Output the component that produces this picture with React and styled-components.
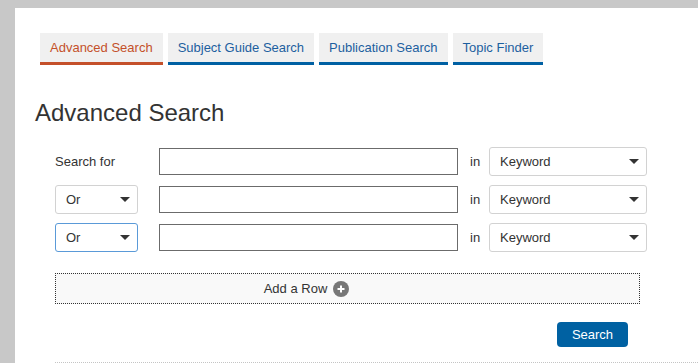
import React from 'react'
import styled, { createGlobalStyle } from 'styled-components'

const GlobalStyle = createGlobalStyle`
  html, body {
    margin: 0;
    padding: 0;
    background: #c8c8c8;
    font-family: "Liberation Sans", Arial, sans-serif;
    color: #333;
  }
`

const Panel = styled.main`
  margin: 8px 0 0 15px;
  background: #fff;
  min-height: 355px;
  padding: 25px 0 0 20px;
  box-sizing: border-box;
  overflow: hidden;
`

const Tabs = styled.nav`
  display: flex;
  gap: 5px;
  margin-left: 5px;
`

const Tab = styled.a`
  display: block;
  height: 29px;
  line-height: 30px;
  padding: 0 10px;
  background: #f0f0f0;
  font-size: 13px;
  color: ${(p) => (p.$active ? '#c4502a' : '#1d5f9f')};
  border-bottom: 3px solid ${(p) => (p.$active ? '#c4502a' : '#0060a3')};
  text-decoration: none;
  white-space: nowrap;
`

const Heading = styled.h1`
  margin: 34px 0 0;
  font-size: 24px;
  line-height: 28px;
  font-weight: normal;
  color: #333;
`

const Form = styled.form`
  margin: 20px 0 0 20px;
`

const Row = styled.div`
  display: grid;
  grid-template-columns: 104px 299px 31px 158px;
  align-items: center;
  height: 29px;
  margin-bottom: 9px;
`

const Label = styled.span`
  font-size: 13px;
  color: #333;
`

const TextInput = styled.input`
  box-sizing: border-box;
  width: 100%;
  height: 27px;
  border: 1px solid #6b6b6b;
  border-radius: 0;
  padding: 0 6px;
  font: inherit;
  outline: none;
`

const In = styled.span`
  font-size: 13px;
  color: #333;
  padding-left: 12px;
`

const SelectBox = styled.div`
  box-sizing: border-box;
  width: ${(p) => p.$width || '100%'};
  height: 29px;
  display: flex;
  align-items: center;
  justify-content: space-between;
  padding: 0 7px 0 10px;
  border: 1px solid ${(p) => (p.$focus ? '#5a9ad8' : '#d2d2d2')};
  border-radius: 3px;
  background: #fff;
  font-size: 13px;
  color: #333;
`

const Caret = () => (
  <svg width="10" height="5" viewBox="0 0 10 5">
    <path d="M0 0 L10 0 L5 5 Z" fill="#333" />
  </svg>
)

const Select = ({ value, width, focus }) => (
  <SelectBox $width={width} $focus={focus}>
    <span>{value}</span>
    <Caret />
  </SelectBox>
)

const AddRow = styled.button`
  display: flex;
  align-items: center;
  justify-content: center;
  gap: 6px;
  box-sizing: border-box;
  width: 585px;
  height: 31px;
  margin-top: 21px;
  padding: 0 82px 0 0;
  background: #f9f9f9;
  border: 1px dotted #333;
  font-family: "Liberation Sans", Arial, sans-serif;
  font-size: 13px;
  color: #333;
  cursor: pointer;
`

const PlusDot = styled.span`
  display: inline-flex;
  align-items: center;
  justify-content: center;
  width: 16px;
  height: 16px;
  border-radius: 50%;
  background: #777;
`

const Actions = styled.div`
  display: flex;
  justify-content: flex-end;
  width: 573px;
  margin-top: 18px;
`

const SearchButton = styled.button`
  width: 71px;
  height: 25px;
  border: none;
  border-radius: 4px;
  background: #0061a2;
  color: #fff;
  font-family: "Liberation Sans", Arial, sans-serif;
  font-size: 13px;
  cursor: pointer;
`

const Divider = styled.div`
  margin-top: 15px;
  border-top: 1px dotted #c4c4c4;
`

const rows = [
  { lead: 'label' },
  { lead: 'select' },
  { lead: 'select', focus: true },
]

const App = () => {
  return (
    <>
      <GlobalStyle />
      <Panel>
        <Tabs>
          <Tab $active>Advanced Search</Tab>
          <Tab>Subject Guide Search</Tab>
          <Tab>Publication Search</Tab>
          <Tab>Topic Finder</Tab>
        </Tabs>
        <Heading>Advanced Search</Heading>
        <Form onSubmit={(e) => e.preventDefault()}>
          {rows.map((r, i) => (
            <Row key={i}>
              {r.lead === 'label' ? (
                <Label>Search for</Label>
              ) : (
                <Select value="Or" width="83px" focus={r.focus} />
              )}
              <TextInput type="text" />
              <In>in</In>
              <Select value="Keyword" />
            </Row>
          ))}
          <AddRow type="button">
            Add a Row
            <PlusDot>
              <svg width="8" height="8" viewBox="0 0 8 8">
                <path d="M4 0.5 V7.5 M0.5 4 H7.5" stroke="#fff" strokeWidth="2" />
              </svg>
            </PlusDot>
          </AddRow>
          <Actions>
            <SearchButton type="submit">Search</SearchButton>
          </Actions>
          <Divider />
        </Form>
      </Panel>
    </>
  )
}

export default App
